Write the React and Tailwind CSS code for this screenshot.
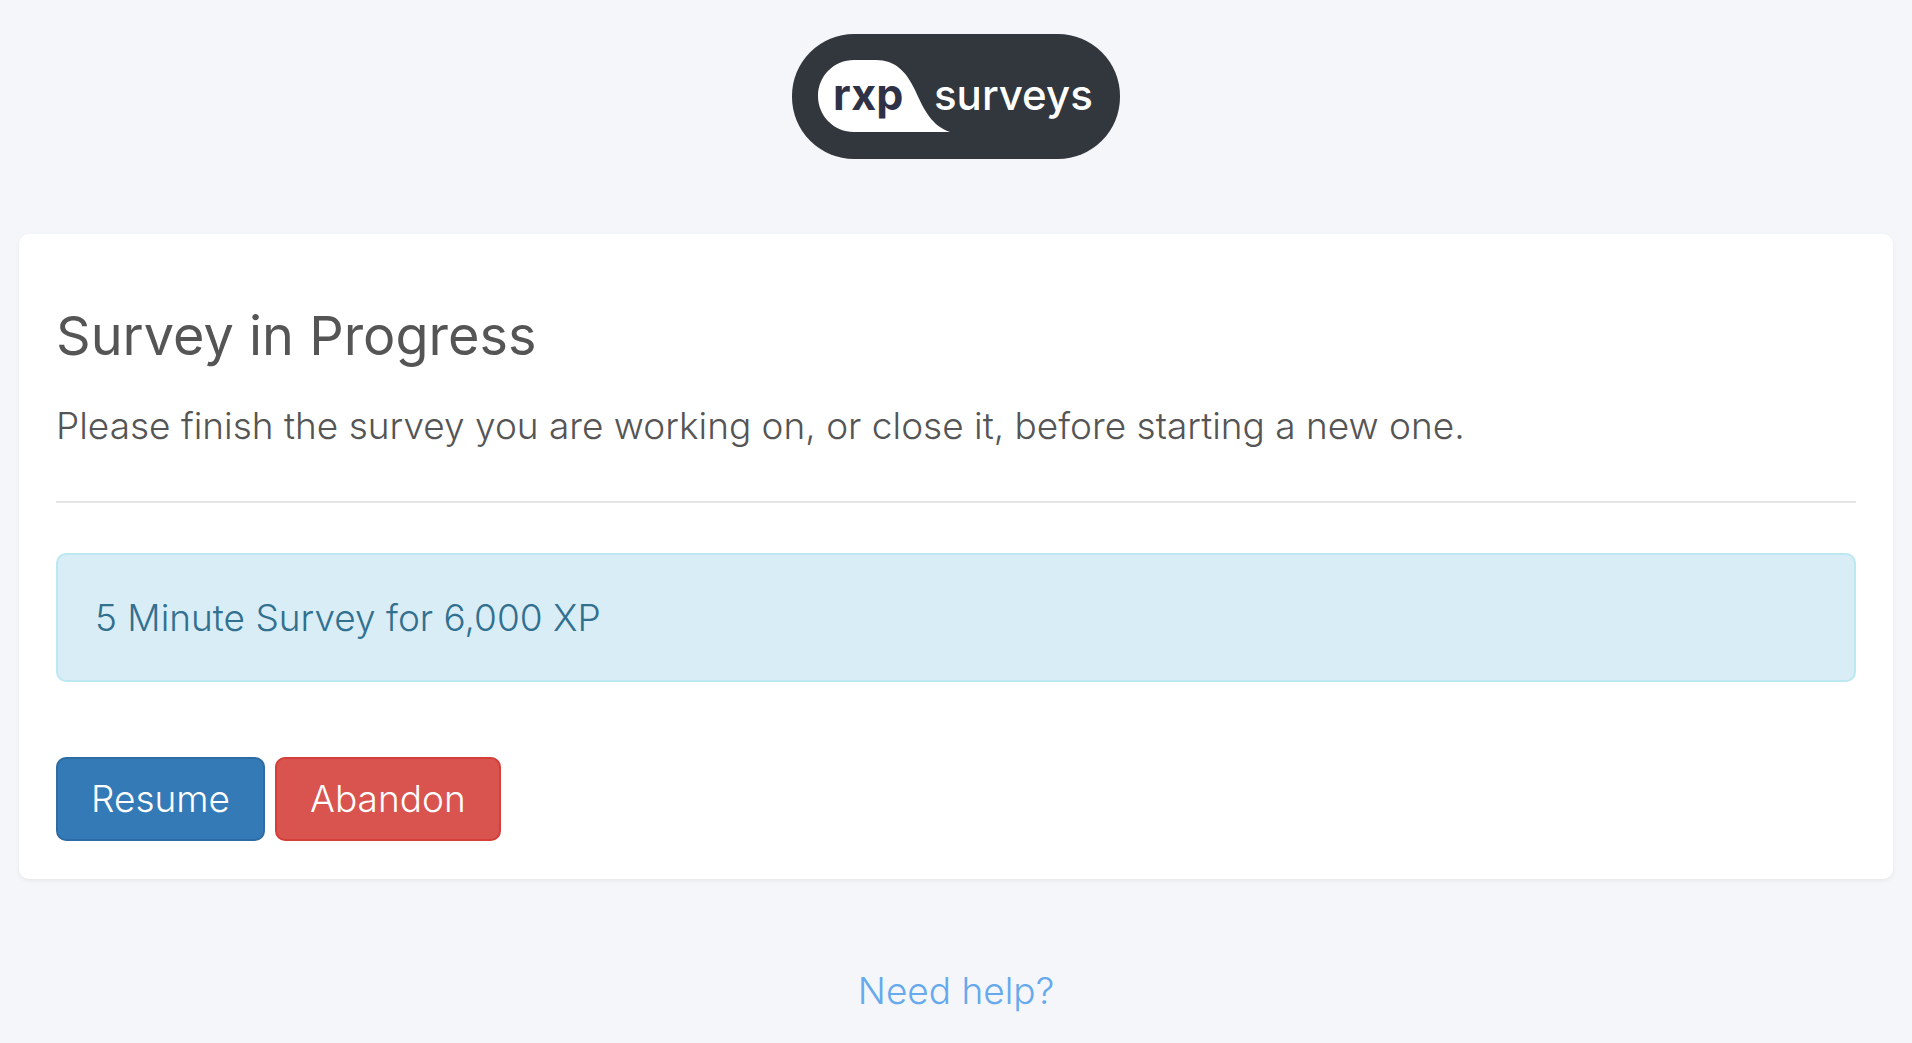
const Logo = () => (
  <svg width="328" height="125" viewBox="0 0 328 125" role="img" aria-label="rxp surveys">
    <rect width="328" height="125" rx="62" fill="#32363d" />
    <path d="M62 26 H84 C103 26 114 37 123 56 C132 76 140 92 158 98 H62 C42 98 26 82 26 62 C26 42 42 26 62 26 Z" fill="#fff" />
    <text x="41" y="76" fontSize="43" fontWeight="700" fill="#2f3247">rxp</text>
    <text x="142" y="76" fontSize="42" fontWeight="500" fill="#fff">surveys</text>
  </svg>
)

const App = () => {
  const survey = { minutes: 5, reward: 6000 }

  return (
    <div className="min-h-screen bg-[#f4f6fa] px-[19px] pt-[34px] font-['Inter',sans-serif] text-[37px] leading-[51px] font-light text-[#555555]">
      <header className="flex justify-center">
        <Logo />
      </header>

      <main className="mt-[75px] rounded-[10px] bg-white px-[37px] pt-[72px] pb-[38px] shadow-[0_2px_4px_rgba(0,0,0,0.06)]">
        <h1 className="text-[54px] leading-[60px] font-normal">Survey in Progress</h1>
        <p className="mt-[34px]">
          Please finish the survey you are working on, or close it, before starting a new one.
        </p>

        <hr className="mt-[50px] border-t-2 border-[#e5e5e5]" />

        <div className="mt-[50px] rounded-[10px] border-2 border-[#bce8f1] bg-[#d9edf7] px-[37px] py-[37px] text-[#31708f]">
          {survey.minutes} Minute Survey for {survey.reward.toLocaleString('en-US')} XP
        </div>

        <div className="mt-[75px] flex gap-[10px]">
          <button type="button" className="rounded-[10px] border-2 border-[#2e6da4] bg-[#337ab7] px-[33px] py-[14px] leading-[52px] text-white hover:bg-[#286090]">
            Resume
          </button>
          <button type="button" className="rounded-[10px] border-2 border-[#d43f3a] bg-[#d9534f] px-[33px] py-[14px] leading-[52px] text-white hover:bg-[#c9302c]">
            Abandon
          </button>
        </div>
      </main>

      <footer className="mt-[86px] text-center">
        <a href="#help" className="text-[#66a9ec] hover:underline">Need help?</a>
      </footer>
    </div>
  )
}

export default App
